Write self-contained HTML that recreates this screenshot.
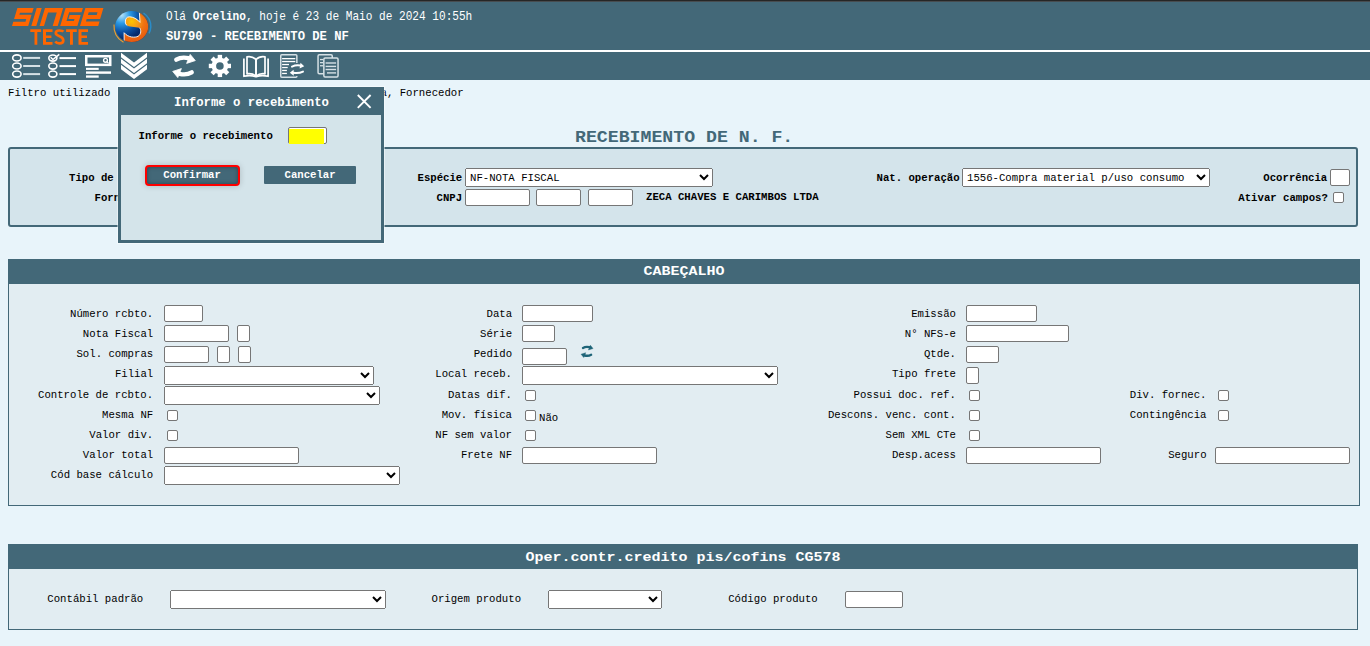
<!DOCTYPE html>
<html><head><meta charset="utf-8">
<style>
html,body{margin:0;padding:0;}
body{width:1370px;height:646px;overflow:hidden;position:relative;background:#e8f4fa;font-family:"Liberation Mono",monospace;font-size:10.67px;color:#000;}
.a{position:absolute;white-space:pre;line-height:10.67px;}
.b{font-weight:bold;}
.hd{color:#fff;}
.inp{position:absolute;box-sizing:border-box;border:1px solid #767676;border-radius:2px;background:#fff;}
select{position:absolute;box-sizing:border-box;margin:0;font-family:"Liberation Mono",monospace;font-size:10.67px;}
.cb{position:absolute;box-sizing:border-box;width:11px;height:11px;border:1px solid #767676;border-radius:2px;background:#fff;}
svg{position:absolute;left:0;top:0;overflow:visible;}
</style></head><body>

<div style="position:absolute;left:0;top:0;width:1370px;height:1px;background:#262626"></div>
<div style="position:absolute;left:0;top:1px;width:1370px;height:1px;background:#474c4f"></div>
<div style="position:absolute;left:0;top:2px;width:1370px;height:48px;background:#436878"></div>
<div style="position:absolute;left:0;top:50px;width:1370px;height:2px;background:#fff"></div>
<div style="position:absolute;left:0;top:52px;width:1370px;height:28px;background:#436878"></div>
<svg width="160" height="50">
<path fill="#ff6600" transform="translate(7.8 0) skewX(-16.7)" d="M12 8H28.2V12.75H12ZM12 12.75H16V14.76H12ZM12 14.76H28.2V19.1H12ZM24.2 19.1H28.2V21.7H24.2ZM12 21.7H28.2V26H12ZM31.3 8H36.3V26H31.3ZM39.6 8H44V26H39.6ZM39.6 8H57.7V12.4H39.6ZM52.7 8H57.7V26H52.7ZM60.2 8H77.5V12.3H60.2ZM60.2 8H65V26H60.2ZM60.2 21H77.3V26H60.2ZM66.3 15H77.4V18.9H66.3ZM72.4 15H77.4V26H72.4ZM80 8H98V12.3H80ZM80 8H84.6V26H80ZM93.4 8H98V18.9H93.4ZM80 15H98V18.9H80ZM80 21.5H98.2V26H80Z"/>
<path fill="#ff6600" d="M30.3 29.3H41.1V32H30.3ZM34.5 29.3H37.3V44.7H34.5ZM43 29.3H46V44.7H43ZM43 29.3H52.5V32H43ZM43 35.6H51.4V37.9H43ZM43 42H52.5V44.7H43ZM66.1 29.3H76.8V32H66.1ZM70 29.3H72.9V44.7H70ZM78.5 29.3H81.5V44.7H78.5ZM78.5 29.3H88V32H78.5ZM78.5 35.6H87V37.9H78.5ZM78.5 42H88V44.7H78.5Z"/>
<path fill="none" stroke="#ff6600" stroke-width="2.7" d="M63.4 31.6C62.6 30.5 61.3 30.5 59.3 30.5C57 30.5 55.8 31.6 55.8 33.1C55.8 35 57.4 35.6 59.5 36.3C61.8 37.1 63.3 38 63.3 40.4C63.3 42.4 61.7 43.4 59.3 43.4C57.3 43.4 56.1 42.8 55.3 41.6"/>
<defs>
<radialGradient id="gb" gradientUnits="userSpaceOnUse" cx="121.5" cy="15" r="28"><stop offset="0" stop-color="#b8e4fa"/><stop offset="0.3" stop-color="#2a9ae6"/><stop offset="0.62" stop-color="#0a4ea0"/><stop offset="0.85" stop-color="#062b6e"/><stop offset="1" stop-color="#052460"/></radialGradient>
<radialGradient id="go" gradientUnits="userSpaceOnUse" cx="131.8" cy="21.5" r="20"><stop offset="0" stop-color="#ffc400"/><stop offset="0.35" stop-color="#f7981a"/><stop offset="0.6" stop-color="#f07412"/><stop offset="1" stop-color="#e65a10"/></radialGradient>
<clipPath id="gc"><ellipse cx="131.7" cy="26.6" rx="16.5" ry="15.5"/></clipPath>
</defs>
<path d="M114 24.5 C113.5 32 117 38.5 123.5 42.3" fill="none" stroke="#f0a030" stroke-width="1.1"/>
<path d="M143.5 13 C148 16 151 21 150.8 27 C150.6 29.5 150 31.5 149 33.3" fill="none" stroke="#2a8cc8" stroke-width="1.5"/>
<ellipse cx="131.7" cy="26.6" rx="16.5" ry="15.5" fill="url(#gb)"/>
<g clip-path="url(#gc)">
<path d="M139.1 8 L140 22.4 C137.5 19 133 16.8 129.4 16.8 C126.5 16.8 125.3 19 125.3 22 C125.3 24.5 127 26 130 26.5 L139.4 27.7 C141.5 29.5 141.2 34.5 138.2 36.2 C135 38 128 37.5 124.1 32.7 L124.2 46 L156 46 L156 8 Z" fill="url(#go)"/>
<path d="M139.1 8 L140 22.4 C137.5 19 133 16.8 129.4 16.8 C126.5 16.8 125.3 19 125.3 22 C125.3 23.5 126 24.8 127.2 25.6" fill="none" stroke="#fff" stroke-width="0.9"/>
<path d="M139.4 27.7 C141.5 29.5 141.2 34.5 138.2 36.2 C135 38 128 37.5 124.1 32.7 L124.2 46" fill="none" stroke="#fff" stroke-width="0.9"/>
</g>
</svg>
<div class="a hd" style="left:166px;top:12px;font-size:11.1px;line-height:11px;transform:scaleY(1.08);transform-origin:0 8px">Olá <b>Orcelino</b>, hoje é 23 de Maio de 2024 10:55h</div>
<div class="a hd b" style="left:166px;top:31px;font-size:12.2px;line-height:12px">SU790 - RECEBIMENTO DE NF</div>
<svg width="400" height="90"><ellipse cx="16.9" cy="57.9" rx="4.2" ry="3.05" fill="none" stroke="#ffffff" stroke-width="1.6"/><rect x="23.2" y="56.9" width="16.9" height="2" fill="#d5e0e5"/><ellipse cx="16.9" cy="66.0" rx="4.2" ry="3.05" fill="none" stroke="#ffffff" stroke-width="1.6"/><rect x="23.2" y="65.0" width="16.9" height="2" fill="#d5e0e5"/><ellipse cx="16.9" cy="74.1" rx="4.2" ry="3.05" fill="none" stroke="#ffffff" stroke-width="1.6"/><rect x="23.2" y="73.1" width="16.9" height="2" fill="#d5e0e5"/><ellipse cx="52.85" cy="58.1" rx="4.05" ry="3.05" fill="none" stroke="#ffffff" stroke-width="1.6"/><rect x="59.5" y="57.1" width="16.5" height="2" fill="#ffffff"/><ellipse cx="52.85" cy="66.1" rx="4.05" ry="3.05" fill="none" stroke="#ffffff" stroke-width="1.6"/><rect x="59.5" y="65.1" width="16.5" height="2" fill="#ffffff"/><ellipse cx="52.85" cy="74.1" rx="4.05" ry="3.05" fill="none" stroke="#ffffff" stroke-width="1.6"/><rect x="59.5" y="73.1" width="16.5" height="2" fill="#ffffff"/><path d="M50.6 57.3 L52.9 59.5 L59.3 54.3" fill="none" stroke="#ffffff" stroke-width="1.5"/><rect x="86.25" y="56.25" width="24" height="8.6" fill="none" stroke="#ffffff" stroke-width="2.5"/><circle cx="105.5" cy="60.3" r="1.9" fill="none" stroke="#ffffff" stroke-width="1.4"/><path d="M106.6 61.5 L108.6 63.4" stroke="#ffffff" stroke-width="1.3"/><rect x="86" y="67.8" width="12.7" height="2.1" fill="#ffffff"/><rect x="86" y="71.4" width="25" height="2.4" fill="#ffffff"/><rect x="86" y="75.4" width="12.7" height="2.3" fill="#ffffff"/><path d="M121 52.8 L134 62.6 L147 52.8 L147 57.3 L134 67.0 L121 57.3 Z" fill="#ffffff"/><path d="M121 58.8 L134 68.6 L147 58.8 L147 63.3 L134 73.0 L121 63.3 Z" fill="#ffffff"/><path d="M121 64.8 L134 74.6 L147 64.8 L147 69.3 L134 79.0 L121 69.3 Z" fill="#ffffff"/><g transform="translate(172 54) scale(1)"><path d="M4.3 5.6 Q9.5 2.6 16.5 4.2" fill="none" stroke="#ffffff" stroke-width="4.4" stroke-linecap="round"/><path d="M18.2 0.4 L23.3 6.6 L14.6 9.4 Z" fill="#ffffff" stroke="#ffffff" stroke-width="0.8" stroke-linejoin="round"/><g transform="rotate(180 12 12)"><path d="M4.3 5.6 Q9.5 2.6 16.5 4.2" fill="none" stroke="#ffffff" stroke-width="4.4" stroke-linecap="round"/><path d="M18.2 0.4 L23.3 6.6 L14.6 9.4 Z" fill="#ffffff" stroke="#ffffff" stroke-width="0.8" stroke-linejoin="round"/></g></g><circle cx="219.9" cy="65.95" r="8.3" fill="#ffffff"/><rect x="217.70000000000002" y="54.85" width="4.4" height="22.2" fill="#ffffff" transform="rotate(0 219.9 65.95)"/><rect x="217.70000000000002" y="54.85" width="4.4" height="22.2" fill="#ffffff" transform="rotate(45 219.9 65.95)"/><rect x="217.70000000000002" y="54.85" width="4.4" height="22.2" fill="#ffffff" transform="rotate(90 219.9 65.95)"/><rect x="217.70000000000002" y="54.85" width="4.4" height="22.2" fill="#ffffff" transform="rotate(135 219.9 65.95)"/><circle cx="219.9" cy="65.95" r="3.8" fill="#436878"/><g fill="none" stroke="#ffffff" stroke-width="1.7" stroke-linejoin="round"><path d="M256 59.5 C253.5 57 250 56.3 247 56.8 V73.8 C250 73.4 253.5 74 256 76.2 Z"/><path d="M256 59.5 C258.5 57 262 56.3 265 56.8 V73.8 C262 73.4 258.5 74 256 76.2 Z"/><path d="M243.9 58.5 V76.3 C248 75.2 252.5 75.5 256 76.8 C259.5 75.5 264 75.2 268.1 76.3 V58.5"/></g><rect x="280.75" y="54.85" width="16.1" height="22.4" rx="1" fill="none" stroke="#d5e0e5" stroke-width="1.5"/><rect x="282.1" y="58.0" width="13.199999999999989" height="1.3" fill="#ffffff"/><rect x="282.1" y="60.9" width="13.199999999999989" height="1.3" fill="#ffffff"/><rect x="282.1" y="63.9" width="7.699999999999989" height="1.3" fill="#ffffff"/><rect x="282.1" y="66.9" width="5.599999999999966" height="1.3" fill="#ffffff"/><rect x="282.1" y="69.80000000000001" width="4.7999999999999545" height="1.3" fill="#ffffff"/><rect x="282.1" y="72.80000000000001" width="4.7999999999999545" height="1.3" fill="#ffffff"/><rect x="289" y="63" width="17" height="13" fill="#436878"/><path d="M292 66.6 Q296 64.6 300.5 65.5" fill="none" stroke="#ffffff" stroke-width="2" stroke-linecap="round"/><path d="M300.5 62.8 L304.2 66.2 L299.6 68.6 Z" fill="#ffffff"/><path d="M303 71.6 Q299 73.6 293.5 72.8" fill="none" stroke="#ffffff" stroke-width="2" stroke-linecap="round"/><path d="M293.6 69.8 L289.8 72.8 L293.8 75.8 Z" fill="#ffffff"/><rect x="318.05" y="54.75" width="14.2" height="18.9" rx="1.2" fill="none" stroke="#d5e0e5" stroke-width="1.5"/><rect x="320" y="58.9" width="3" height="1.3" fill="#d5e0e5"/><rect x="320" y="62.0" width="3" height="1.3" fill="#d5e0e5"/><rect x="320" y="65.10000000000001" width="3" height="1.3" fill="#d5e0e5"/><rect x="323.85" y="57.95" width="14.2" height="19.1" rx="1.2" fill="#436878" stroke="#d5e0e5" stroke-width="1.5"/><rect x="325.6" y="62.3" width="10.5" height="1.4" fill="#d5e0e5"/><rect x="325.6" y="65.7" width="10.5" height="1.4" fill="#d5e0e5"/><rect x="325.6" y="68.8" width="10.5" height="1.4" fill="#d5e0e5"/><rect x="327" y="72.2" width="9.100000000000023" height="1.4" fill="#d5e0e5"/></svg>
<div class="a" style="left:8.00px;top:88px;">Filtro utilizado</div>
<div class="a" style="left:380.50px;top:88px;">a, Fornecedor</div>
<div class="a b" style="left:575px;top:128px;font-size:18.2px;line-height:18px;color:#436878;transform:scaleY(.92);transform-origin:0 14px">RECEBIMENTO DE N. F.</div>
<div style="position:absolute;left:8px;top:147px;width:1350px;height:80px;box-sizing:border-box;border:2px solid #436878;border-radius:3px;background:#d4e4eb"></div>
<div class="a b" style="left:69.00px;top:173px;">Tipo de receb.</div>
<div class="a b" style="left:94.50px;top:193px;">Fornecedor</div>
<div class="a b" style="left:417.50px;top:173px;">Espécie</div>
<select style="left:465px;top:168px;width:248px;height:19px;padding-top:1px;padding-bottom:0"><option>NF-NOTA FISCAL</option></select>
<div class="a b" style="left:436.50px;top:193px;">CNPJ</div>
<div class="inp" style="left:465px;top:189px;width:65px;height:17px;"></div>
<div class="inp" style="left:536px;top:189px;width:45px;height:17px;"></div>
<div class="inp" style="left:588px;top:189px;width:45px;height:17px;"></div>
<div class="a b" style="left:646.00px;top:192px;">ZECA CHAVES E CARIMBOS LTDA</div>
<div class="a b" style="left:876.50px;top:173px;">Nat. operação</div>
<select style="left:962px;top:168px;width:248px;height:19px;padding-top:1px;padding-bottom:0"><option>1556-Compra material p/uso consumo</option></select>
<div class="a b" style="left:1263.30px;top:173px;">Ocorrência</div>
<div class="inp" style="left:1330px;top:169px;width:20px;height:17px;"></div>
<div class="a b" style="left:1238.30px;top:193px;">Ativar campos?</div>
<div class="cb" style="left:1333px;top:192px;"></div>
<div style="position:absolute;left:8px;top:259px;width:1352px;height:247px;box-sizing:border-box;border:1px solid #436878;background:#e2edf2"></div>
<div style="position:absolute;left:8px;top:259px;width:1352px;height:25px;background:#436878"></div>
<div class="a b hd" style="left:8px;width:1352px;text-align:center;top:264px;font-size:15px;line-height:15px;transform:scaleY(.8);transform-origin:50% 11px">CABEÇALHO</div>
<div class="a" style="left:70.06px;top:309px;">Número rcbto.</div>
<div class="inp" style="left:164px;top:305px;width:39px;height:17px;"></div>
<div class="a" style="left:82.87px;top:329px;">Nota Fiscal</div>
<div class="inp" style="left:164px;top:325px;width:65px;height:17px;"></div>
<div class="inp" style="left:237px;top:325px;width:13px;height:17px;"></div>
<div class="a" style="left:76.46px;top:349px;">Sol. compras</div>
<div class="inp" style="left:164px;top:346px;width:45px;height:17px;"></div>
<div class="inp" style="left:217px;top:346px;width:13px;height:17px;"></div>
<div class="inp" style="left:238px;top:346px;width:13px;height:17px;"></div>
<div class="a" style="left:114.88px;top:369px;">Filial</div>
<select style="left:164px;top:366px;width:210px;height:19px;"><option></option></select>
<div class="a" style="left:38.04px;top:390px;">Controle de rcbto.</div>
<select style="left:164px;top:386px;width:216px;height:19px;"><option></option></select>
<div class="a" style="left:102.08px;top:410px;">Mesma NF</div>
<div class="cb" style="left:167px;top:410px;"></div>
<div class="a" style="left:89.27px;top:430px;">Valor div.</div>
<div class="cb" style="left:167px;top:430px;"></div>
<div class="a" style="left:82.87px;top:450px;">Valor total</div>
<div class="inp" style="left:164px;top:447px;width:135px;height:17px;"></div>
<div class="a" style="left:50.85px;top:470px;">Cód base cálculo</div>
<select style="left:164px;top:466px;width:236px;height:19px;"><option></option></select>
<div class="a" style="left:486.49px;top:309px;">Data</div>
<div class="inp" style="left:522px;top:305px;width:71px;height:17px;"></div>
<div class="a" style="left:480.08px;top:329px;">Série</div>
<div class="inp" style="left:522px;top:325px;width:33px;height:17px;"></div>
<div class="a" style="left:473.68px;top:349px;">Pedido</div>
<div class="inp" style="left:522px;top:348px;width:45px;height:17px;"></div>
<svg width="700" height="400"><g transform="translate(580.7 345.0) scale(0.53)"><path d="M4.3 5.6 Q9.5 2.6 16.5 4.2" fill="none" stroke="#1e6478" stroke-width="4.4" stroke-linecap="round"/><path d="M18.2 0.4 L23.3 6.6 L14.6 9.4 Z" fill="#1e6478" stroke="#1e6478" stroke-width="0.8" stroke-linejoin="round"/><g transform="rotate(180 12 12)"><path d="M4.3 5.6 Q9.5 2.6 16.5 4.2" fill="none" stroke="#1e6478" stroke-width="4.4" stroke-linecap="round"/><path d="M18.2 0.4 L23.3 6.6 L14.6 9.4 Z" fill="#1e6478" stroke="#1e6478" stroke-width="0.8" stroke-linejoin="round"/></g></g></svg>
<div class="a" style="left:435.26px;top:369px;">Local receb.</div>
<select style="left:522px;top:366px;width:256px;height:19px;"><option></option></select>
<div class="a" style="left:448.07px;top:390px;">Datas dif.</div>
<div class="cb" style="left:525px;top:390px;"></div>
<div class="a" style="left:441.67px;top:410px;">Mov. física</div>
<div class="cb" style="left:525px;top:410px;"></div>
<div class="a" style="left:539.00px;top:413px;">Não</div>
<div class="a" style="left:435.26px;top:430px;">NF sem valor</div>
<div class="cb" style="left:525px;top:430px;"></div>
<div class="a" style="left:460.88px;top:450px;">Frete NF</div>
<div class="inp" style="left:522px;top:447px;width:135px;height:17px;"></div>
<div class="a" style="left:911.18px;top:309px;">Emissão</div>
<div class="inp" style="left:966px;top:305px;width:71px;height:17px;"></div>
<div class="a" style="left:904.78px;top:329px;">N° NFS-e</div>
<div class="inp" style="left:966px;top:325px;width:103px;height:17px;"></div>
<div class="a" style="left:923.98px;top:349px;">Qtde.</div>
<div class="inp" style="left:966px;top:346px;width:33px;height:17px;"></div>
<div class="a" style="left:891.97px;top:369px;">Tipo frete</div>
<div class="inp" style="left:966px;top:367px;width:13px;height:17px;"></div>
<div class="a" style="left:853.55px;top:390px;">Possui doc. ref.</div>
<div class="cb" style="left:969px;top:390px;"></div>
<div class="a" style="left:827.94px;top:410px;">Descons. venc. cont.</div>
<div class="cb" style="left:969px;top:410px;"></div>
<div class="a" style="left:885.57px;top:430px;">Sem XML CTe</div>
<div class="cb" style="left:969px;top:430px;"></div>
<div class="a" style="left:891.97px;top:450px;">Desp.acess</div>
<div class="inp" style="left:966px;top:447px;width:135px;height:17px;"></div>
<div class="a" style="left:1129.76px;top:390px;">Div. fornec.</div>
<div class="cb" style="left:1218px;top:390px;"></div>
<div class="a" style="left:1129.76px;top:410px;">Contingência</div>
<div class="cb" style="left:1218px;top:410px;"></div>
<div class="a" style="left:1168.18px;top:450px;">Seguro</div>
<div class="inp" style="left:1215px;top:447px;width:135px;height:17px;"></div>
<div style="position:absolute;left:8px;top:544px;width:1350px;height:86px;box-sizing:border-box;border:1px solid #436878;background:#e2edf2"></div>
<div style="position:absolute;left:8px;top:544px;width:1350px;height:25px;background:#436878"></div>
<div class="a b hd" style="left:8px;width:1350px;text-align:center;top:550px;font-size:15px;line-height:15px;transform:scaleY(.8);transform-origin:50% 11px">Oper.contr.credito pis/cofins CG578</div>
<div class="a" style="left:47.30px;top:594px;">Contábil padrão</div>
<select style="left:170px;top:590px;width:216px;height:19px;"><option></option></select>
<div class="a" style="left:431.50px;top:594px;">Origem produto</div>
<select style="left:548px;top:590px;width:114px;height:19px;"><option></option></select>
<div class="a" style="left:728.20px;top:594px;">Código produto</div>
<div class="inp" style="left:845px;top:591px;width:58px;height:17px;"></div>
<div style="position:absolute;left:117px;top:86px;width:268px;height:158px;background:rgba(255,255,255,.45)"></div>
<div style="position:absolute;left:118px;top:87px;width:266px;height:156px;background:#436878"></div>
<div style="position:absolute;left:121px;top:115px;width:260px;height:125px;background:#d4e4ea"></div>
<div class="a b hd" style="left:174px;top:97px;font-size:12.3px;line-height:12px">Informe o recebimento</div>
<svg width="400" height="200"><path d="M357.8 95 L370.6 107.8 M370.6 95 L357.8 107.8" stroke="#fff" stroke-width="1.9"/></svg>
<div class="a b" style="left:138.50px;top:131px;">Informe o recebimento</div>
<div class="inp" style="left:288px;top:127px;width:39px;height:17px;"><div style="position:absolute;left:0;top:1px;width:35px;height:15px;background:#ffff00"></div></div>
<div style="position:absolute;left:145px;top:164.5px;width:95px;height:21px;box-sizing:border-box;border:2px solid #f00;border-radius:4px;background:#436878;box-shadow:inset 0 0 4px rgba(0,0,0,.35),0 0 6px rgba(0,0,0,.18)"></div>
<div class="a b" style="left:163.30px;top:170px;color:#fff;">Confirmar</div>
<div style="position:absolute;left:264px;top:166px;width:92px;height:18px;border-radius:1px;background:#436878"></div>
<div class="a b" style="left:284.50px;top:170px;color:#fff;">Cancelar</div>
</body></html>
